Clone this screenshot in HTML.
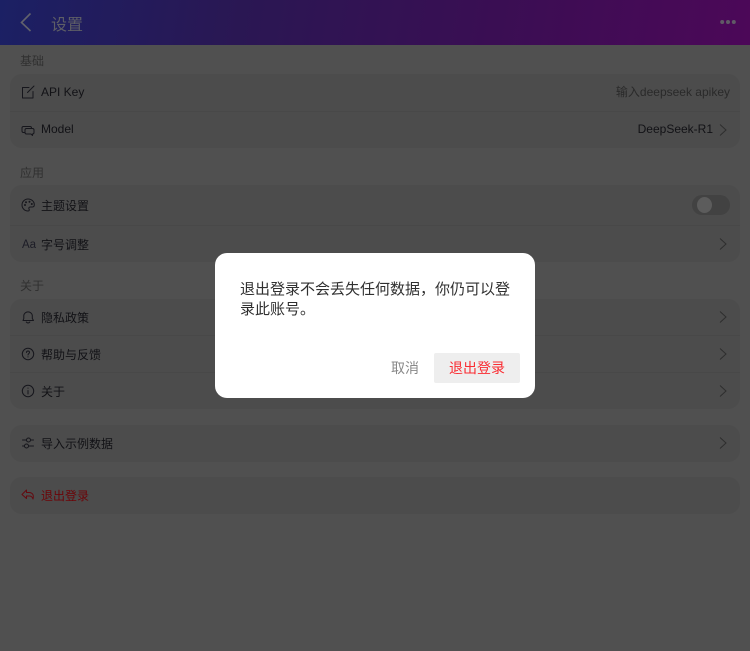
<!DOCTYPE html>
<html lang="zh-CN"><head><meta charset="utf-8"><title>设置</title>
<style>
*{box-sizing:border-box;margin:0;padding:0}
html,body{width:750px;height:651px;overflow:hidden}
body{position:relative;background:#505050;font-family:"Liberation Sans","WenQuanYi Zen Hei","Noto Sans CJK SC",sans-serif;color:#141418}
.abs{position:absolute}
.hdr{left:0;top:0;width:750px;height:45px;background:linear-gradient(100deg,#1b2064 0%,#2a1753 32%,#3a0e53 66%,#4c0858 100%)}
.ttl{left:51px;top:16px;font-size:16px;line-height:20px;color:#5e5e66}
.sec{left:20px;font-size:12px;line-height:16px;color:#303030}
.card{left:10px;width:730px;background:#4c4c4c;border-radius:12px}
.line{left:10px;width:730px;height:1px;background:#484848}
.t{left:41px;font-size:12px;line-height:16px;color:#121216;white-space:nowrap}
.ic{left:20px;width:16px;height:16px;fill:none;stroke:#16161c;stroke-width:1;stroke-linecap:round;stroke-linejoin:round}
.ch{left:718px;width:10px;height:14px;fill:none;stroke:#2e2e2e;stroke-width:1}
.r{right:20px;font-size:12px;line-height:16px;white-space:nowrap}
.dlg{left:215px;top:253px;width:320px;height:145px;background:#fff;border-radius:12px}
.msg{left:25px;top:27px;width:276px;font-size:15px;line-height:20px;color:#303030}
.cancel{left:176px;top:106px;font-size:14px;line-height:18px;color:#888}
.btn{left:219px;top:100px;width:86px;height:30px;background:#eee;border-radius:2px;color:#fa2c32;font-size:14px;line-height:30px;text-align:center}
</style></head><body>
<div class="abs hdr"></div>
<svg class="abs" style="left:18px;top:12px;width:16px;height:22px" viewBox="0 0 16 22" fill="none" stroke="#62626c" stroke-width="1.6"><path d="M12.5 1.500 3.500 10.500 12.500 19"/></svg>
<div class="abs ttl">设置</div>
<svg class="abs" style="left:720px;top:19px;width:16px;height:6px" viewBox="0 0 16 6" fill="#605a66"><circle cx="2.200" cy="3" r="2"/><circle cx="8" cy="3" r="2"/><circle cx="13.800" cy="3" r="2"/></svg>

<div class="abs sec" style="top:53px">基础</div>
<div class="abs card" style="top:74px;height:74px"></div>
<div class="abs line" style="top:111px"></div>
<svg class="abs ic" style="top:84px" viewBox="0 0 16 16"><path d="M13 7.500V14H2.500V3.500H9M7.500 8.500 14 2"/></svg>
<div class="abs t" style="top:84px">API Key</div>
<div class="abs r" style="top:84px;color:#2a2a2a">输入deepseek apikey</div>
<svg class="abs ic" style="top:122px" viewBox="0 0 16 16"><path d="M4.500 10.500H3.500Q2 10.500 2 9V6Q2 4.500 3.500 4.500H10Q11.500 4.500 11.500 6V6.500M6.500 6.500H12.500Q14 6.500 14 8V10.500Q14 12 12.500 12V13.500L11 12H6.500Q5 12 5 10.500V8Q5 6.500 6.500 6.500Z"/></svg>
<div class="abs t" style="top:121px">Model</div>
<div class="abs r" style="top:121px;right:37px;color:#121216">DeepSeek-R1</div>
<svg class="abs ch" style="top:123px" viewBox="0 0 10 14"><path d="M2 1.500 8 7 2 12.500"/></svg>

<div class="abs sec" style="top:165px">应用</div>
<div class="abs card" style="top:185px;height:77px"></div>
<div class="abs line" style="top:225px"></div>
<svg class="abs ic" style="top:197px" viewBox="0 0 16 16"><path d="M8 2A6 6 0 1 0 8 14C9.500 14 9.500 12.800 9 12 8.500 11 9 10 10.200 10H12.500C13.800 10 14.300 9 14.300 7.800 14.300 4.500 11.500 2 8 2Z"/><circle cx="5" cy="8" r=".5"/><circle cx="6" cy="5.300" r=".5"/><circle cx="9.500" cy="4.800" r=".5"/><circle cx="11.800" cy="7" r=".5"/></svg>
<div class="abs t" style="top:198px">主题设置</div>
<div class="abs" style="left:692px;top:195px;width:38px;height:20px;border-radius:10px;background:#424242"></div>
<div class="abs" style="left:697px;top:197px;width:15px;height:16px;border-radius:50%;background:#5c5c5c"></div>
<div class="abs" style="left:22px;top:237px;font-size:11.500px;line-height:16px;color:#1c1c26">Aa</div>
<div class="abs t" style="top:237px">字号调整</div>
<svg class="abs ch" style="top:237px" viewBox="0 0 10 14"><path d="M2 1.500 8 7 2 12.500"/></svg>

<div class="abs sec" style="top:278px">关于</div>
<div class="abs card" style="top:299px;height:110px"></div>
<div class="abs line" style="top:335px"></div>
<div class="abs line" style="top:372px"></div>
<svg class="abs ic" style="top:309px" viewBox="0 0 16 16"><path d="M3 11.500H13.500L12.300 9.500V6.500A4.300 4.300 0 0 0 3.800 6.500V9.500ZM6.300 13Q8 15 9.800 13"/></svg>
<div class="abs t" style="top:310px">隐私政策</div>
<svg class="abs ch" style="top:310px" viewBox="0 0 10 14"><path d="M2 1.500 8 7 2 12.500"/></svg>
<svg class="abs ic" style="top:346px" viewBox="0 0 16 16"><circle cx="8" cy="8" r="5.700"/><path d="M6.500 6.500Q6.500 5 8 5T9.500 6.500C9.500 7.500 8 7.500 8 9M8 10.800V11"/></svg>
<div class="abs t" style="top:347px">帮助与反馈</div>
<svg class="abs ch" style="top:347px" viewBox="0 0 10 14"><path d="M2 1.500 8 7 2 12.500"/></svg>
<svg class="abs ic" style="top:383px" viewBox="0 0 16 16"><circle cx="8" cy="8" r="5.700"/><path d="M8 7.500V11M8 5V5.200"/></svg>
<div class="abs t" style="top:384px">关于</div>
<svg class="abs ch" style="top:384px" viewBox="0 0 10 14"><path d="M2 1.500 8 7 2 12.500"/></svg>

<div class="abs card" style="top:425px;height:37px"></div>
<svg class="abs ic" style="top:435px" viewBox="0 0 16 16"><path d="M2.500 5H6.500M10.500 5H13.500M2.500 11H4.500M8.500 11H13.500"/><circle cx="8.500" cy="5" r="2"/><circle cx="6.500" cy="11" r="2"/></svg>
<div class="abs t" style="top:436px">导入示例数据</div>
<svg class="abs ch" style="top:436px" viewBox="0 0 10 14"><path d="M2 1.500 8 7 2 12.500"/></svg>

<div class="abs card" style="top:477px;height:37px"></div>
<svg class="abs ic" style="top:487px;stroke:#640a10" viewBox="0 0 16 16"><path d="M6.500 3 2 7.500 6.500 11.500V9H9.500Q12 9 13 12 14.500 5.800 9 5.500H6.500Z"/></svg>
<div class="abs t" style="top:488px;color:#6c0408">退出登录</div>

<div class="abs dlg">
<div class="abs msg">退出登录不会丢失任何数据，你仍可以登录此账号。</div>
<div class="abs cancel">取消</div>
<div class="abs btn">退出登录</div>
</div>
</body></html>
